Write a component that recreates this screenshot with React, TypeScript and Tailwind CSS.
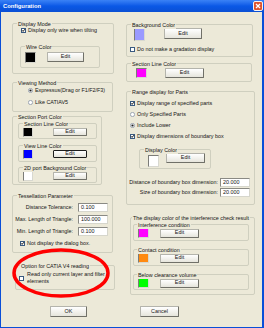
import type { ReactNode } from "react";
import clsx from "clsx";

function Group({
  label,
  className,
  labelClass = "left-[4px]",
  children,
}: {
  label: string;
  className?: string;
  labelClass?: string;
  children?: ReactNode;
}) {
  return (
    <div
      className={clsx(
        "relative shrink-0 rounded-[2px] border border-[#cfcfbf]",
        className,
      )}
    >
      <span
        className={clsx(
          "absolute -top-[3px] whitespace-nowrap bg-[#ECE9D8] px-[1px] leading-[7px]",
          labelClass,
        )}
      >
        {label}
      </span>
      {children}
    </div>
  );
}

function Check({ checked = false }: { checked?: boolean }) {
  return (
    <svg width="5" height="5" viewBox="0 0 5 5" className="shrink-0">
      <rect x="0.5" y="0.5" width="4" height="4" fill="#fff" stroke="#3a5a80" />
      {checked && (
        <path
          d="M1.1 2.3 L2.1 3.4 L3.9 1.2"
          stroke="#111"
          strokeWidth="1"
          fill="none"
        />
      )}
    </svg>
  );
}

function Radio({ on = false }: { on?: boolean }) {
  return (
    <svg width="5" height="5" viewBox="0 0 5 5" className="shrink-0">
      <circle cx="2.5" cy="2.5" r="2.1" fill="#fff" stroke="#8a96a6" strokeWidth="0.8" />
      {on && <circle cx="2.5" cy="2.5" r="1.1" fill="#1a1a1a" />}
    </svg>
  );
}

function Swatch({ className }: { className: string }) {
  return (
    <span
      className={clsx(
        "block shrink-0 border border-[#7c7c78] border-r-[#d8d8d0] border-b-[#d8d8d0]",
        className,
      )}
    />
  );
}

function Button({
  label = "Edit",
  className,
  focused = false,
}: {
  label?: string;
  className: string;
  focused?: boolean;
}) {
  return (
    <span
      className={clsx(
        "flex shrink-0 items-center justify-center rounded-[1px] border bg-linear-to-b from-white to-[#e6e5dc] leading-none",
        focused
          ? "border-[#1e1e1e]"
          : "border-[#b4b4ac] border-r-[#707068] border-b-[#707068]",
        className,
      )}
    >
      {label}
    </span>
  );
}

function Field({ value }: { value: string }) {
  return (
    <span className="flex h-[9px] w-[30px] shrink-0 items-center border border-[#8a8a84] border-r-[#d6d6cc] border-b-[#d6d6cc] bg-white pl-[2px] leading-none">
      {value}
    </span>
  );
}

function ColorRow({
  swatch,
  gap,
  button,
  focused,
  pad,
}: {
  swatch: string;
  gap: string;
  button: string;
  focused?: boolean;
  pad: string;
}) {
  return (
    <div className={clsx("flex items-center", gap, pad)}>
      <Swatch className={swatch} />
      <Button className={button} focused={focused} />
    </div>
  );
}

function LeftColumn() {
  return (
    <div className="ml-[11px] flex w-[104px] shrink-0 flex-col pt-[11px]">
      <Group label="Display Mode" className="h-[51px] w-[102px]">
        <div className="mt-[3px] flex items-center gap-[2px] pl-[8px]">
          <Check checked />
          <span className="whitespace-nowrap">Display only wire when tilting</span>
        </div>
        <Group label="Wire Color" className="ml-[7px] mt-[12px] h-[22px] w-[80px]">
          <div className="flex items-start gap-[11px] pl-[4px] pt-[5px]">
            <Swatch className="h-[11px] w-[11px] bg-black" />
            <Button className="h-[10px] w-[37px]" />
          </div>
        </Group>
      </Group>

      <Group label="Viewing Method" className="mt-[8px] h-[30px] w-[101px]">
        <div className="flex flex-col gap-[5px] pl-[15px] pt-[4px]">
          <div className="flex items-center gap-[2px]">
            <Radio on />
            <span className="whitespace-nowrap">Expressus(Drag or F1/F2/F3)</span>
          </div>
          <div className="flex items-center gap-[2px]">
            <Radio />
            <span>Like CATIAV5</span>
          </div>
        </div>
      </Group>

      <Group label="Section Port Color" className="mt-[4px] h-[69px] w-[90px]">
        <Group label="Section Line Color" className="ml-[5px] mt-[6px] h-[16px] w-[79px]">
          <ColorRow
            swatch="h-[10px] w-[10px] bg-black"
            gap="gap-[20px]"
            button="h-[8px] w-[34px]"
            pad="pl-[4px] pt-[3px]"
          />
        </Group>
        <Group label="View Line Color" className="ml-[5px] mt-[6px] h-[17px] w-[79px]">
          <ColorRow
            swatch="h-[10px] w-[10px] bg-[#0000ff]"
            gap="gap-[20px]"
            button="h-[8px] w-[34px]"
            focused
            pad="pl-[4px] pt-[3px]"
          />
        </Group>
        <Group label="2D port Background Color" className="ml-[5px] mt-[5px] h-[16px] w-[79px]">
          <ColorRow
            swatch="h-[10px] w-[10px] bg-white"
            gap="gap-[20px]"
            button="h-[8px] w-[34px]"
            pad="pl-[4px] pt-[3px]"
          />
        </Group>
      </Group>

      <Group label="Tessellation Parameter" className="mt-[10px] h-[58px] w-[101px]">
        <div className="flex flex-col items-end gap-[3px] pr-[4px] pt-[7px]">
          {[
            ["Distance Tolerance:", "0.100"],
            ["Max. Length of Triangle:", "100.000"],
            ["Min. Length of Triangle:", "0.100"],
          ].map(([label, value]) => (
            <div key={label} className="flex items-center gap-[5px]">
              <span className="whitespace-nowrap">{label}</span>
              <Field value={value} />
            </div>
          ))}
        </div>
        <div className="mt-[4px] flex items-center gap-[2px] pl-[7px]">
          <Check checked />
          <span className="whitespace-nowrap">Not display the dialog box.</span>
        </div>
      </Group>

      <Group
        label="Option for CATIA V4 reading"
        className="ml-[3px] mt-[12px] h-[25px] w-[100px]"
      >
        <div className="flex items-center gap-[3px] pl-[3px] pt-[5px]">
          <Check />
          <span className="whitespace-nowrap">
            Read only current layer and filter
            <br />
            elements
          </span>
        </div>
      </Group>

      <Button label="OK" className="ml-[38px] mt-[16px] h-[11px] w-[37px]" />
    </div>
  );
}

function RightColumn() {
  return (
    <div className="ml-[10px] flex w-[130px] shrink-0 flex-col pt-[12px]">
      <Group label="Background Color" className="h-[33px] w-[127px]">
        <div className="flex items-start gap-[19px] pl-[7px] pt-[3px]">
          <Swatch className="h-[13px] w-[11px] bg-[#9a9aff]" />
          <Button className="h-[11px] w-[38px]" />
        </div>
        <div className="mt-[5px] flex items-center gap-[2px] pl-[3px]">
          <Check />
          <span className="whitespace-nowrap">Do not make a gradation display</span>
        </div>
      </Group>

      <Group label="Section Line Color" className="mt-[6px] h-[19px] w-[126px]">
        <ColorRow
          swatch="h-[10px] w-[11px] bg-[#ff00ff]"
          gap="gap-[18px]"
          button="h-[10px] w-[39px]"
          pad="pl-[9px] pt-[4px]"
        />
      </Group>

      <Group label="Range display for Parts" className="mt-[9px] h-[114px] w-[129px]">
        <div className="flex flex-col gap-[4px] pl-[3px] pt-[8px]">
          <div className="flex items-center gap-[2px]">
            <Check checked />
            <span className="whitespace-nowrap">Display range of specified parts</span>
          </div>
          <div className="flex items-center gap-[2px]">
            <Radio />
            <span>Only Specified Parts</span>
          </div>
          <div className="flex items-center gap-[2px]">
            <Radio on />
            <span>Include Lower</span>
          </div>
          <div className="flex items-center gap-[2px]">
            <Check checked />
            <span className="whitespace-nowrap">Display dimensions of boundary box</span>
          </div>
        </div>
        <Group label="Display Color" className="ml-[12px] mt-[9px] h-[20px] w-[72px]">
          <div className="flex items-start gap-[7px] pl-[8px] pt-[3px]">
            <Swatch className="mt-[2px] h-[12px] w-[11px] bg-white" />
            <Button className="h-[10px] w-[39px]" />
          </div>
        </Group>
        <div className="mt-[9px] flex flex-col items-end gap-[1px] pr-[4px]">
          <div className="flex items-center gap-[2px]">
            <span className="whitespace-nowrap">Distance of boundary box dimension:</span>
            <Field value="20.000" />
          </div>
          <div className="flex items-center gap-[2px]">
            <span className="whitespace-nowrap">Size of boundary box dimension:</span>
            <Field value="20.000" />
          </div>
        </div>
      </Group>

      <Group
        label="The display color of the interference check result"
        labelClass="left-[1px]"
        className="ml-[4px] mt-[12px] h-[78px] w-[125px]"
      >
        <Group label="Interference condition" labelClass="left-[3px]" className="ml-[2px] mt-[6px] h-[17px] w-[116px]">
          <ColorRow
            swatch="h-[10px] w-[11px] bg-[#ff00ff]"
            gap="gap-[11px]"
            button="h-[9px] w-[39px]"
            pad="pl-[4px] pt-[3px]"
          />
        </Group>
        <Group label="Contact condition" labelClass="left-[3px]" className="ml-[2px] mt-[8px] h-[17px] w-[116px]">
          <ColorRow
            swatch="h-[10px] w-[11px] bg-[#ff8a10]"
            gap="gap-[11px]"
            button="h-[9px] w-[39px]"
            pad="pl-[4px] pt-[3px]"
          />
        </Group>
        <Group label="Below clearance volume" labelClass="left-[3px]" className="ml-[2px] mt-[8px] h-[16px] w-[116px]">
          <ColorRow
            swatch="h-[10px] w-[11px] bg-[#00ff00]"
            gap="gap-[11px]"
            button="h-[9px] w-[39px]"
            pad="pl-[4px] pt-[3px]"
          />
        </Group>
      </Group>

      <Button label="Cancel" className="ml-[14px] mt-[11px] h-[11px] w-[39px]" />
    </div>
  );
}

export default function App() {
  return (
    <div className="relative flex h-[328px] w-[264px] flex-col overflow-hidden bg-[#0a4fd8] font-['Liberation_Sans',Arial,sans-serif] text-[5.4px] leading-[7px] text-[#151515]">
      <div className="flex h-[12px] shrink-0 items-center justify-between bg-linear-to-b from-[#3a82f6] via-[#0a58e6] to-[#0b50d4] pl-[3px] pr-[1px]">
        <span className="text-[5.8px] font-bold text-white">Configuration</span>
        <span className="flex h-[10px] w-[10px] items-center justify-center rounded-[2px] border border-[#f4f4f4] bg-[#e0542e]">
          <svg width="6" height="6" viewBox="0 0 6 6">
            <path d="M1 1 L5 5 M5 1 L1 5" stroke="#fff" strokeWidth="1.3" />
          </svg>
        </span>
      </div>
      <div className="mb-[1px] ml-[1px] mr-[2px] flex flex-1 bg-[#ECE9D8]">
        <LeftColumn />
        <RightColumn />
      </div>
      <svg
        className="pointer-events-none absolute left-0 top-0"
        width="264"
        height="328"
      >
        <ellipse
          cx="61"
          cy="273"
          rx="47"
          ry="23"
          fill="none"
          stroke="#ff0000"
          strokeWidth="3.5"
        />
      </svg>
    </div>
  );
}
